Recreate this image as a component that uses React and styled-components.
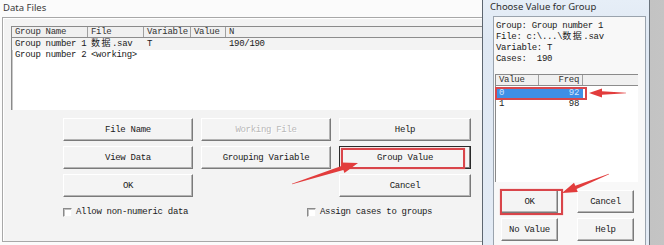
import React from "react";
import styled, { createGlobalStyle, css } from "styled-components";

const GlobalStyle = createGlobalStyle`
	html, body {
		margin: 0;
		padding: 0;
		background: #fbfbfb;
		overflow: hidden;
	}
`;

const mono = `"Liberation Mono", "Noto Sans CJK SC", monospace`;

const Screen = styled.div`
	position: relative;
	width: 664px;
	height: 245px;
	display: flex;
	overflow: hidden;
	background: #fbfbfb;
	font-family: ${mono};
	font-size: 9px;
	letter-spacing: -0.3px;
	color: #1a1a1a;
`;

const MainWindow = styled.div`
	width: 500px;
	display: flex;
	flex-direction: column;
`;

const WindowTitle = styled.div`
	height: 17px;
	line-height: 15px;
	padding-left: 3px;
	font-family: "Noto Sans", sans-serif;
	font-size: 9.5px;
	letter-spacing: 0;
	color: #3a3a3a;
	box-sizing: border-box;
`;

const Panel = styled.div`
	margin-left: 2px;
	height: 225px;
	border: 1px solid #a8a8a8;
	border-right: none;
	box-shadow: inset 1px 1px 0 #ffffff;
	background: #f3f3f3;
	padding: 8px 0 0 8px;
	box-sizing: border-box;
`;

const ListBox = styled.div`
	height: 84px;
	background: #ffffff;
	border-top: 1px solid #8a8a8a;
	border-left: 1px solid #8a8a8a;
	box-shadow: inset 1px 1px 0 #c8c8c8;
	box-sizing: border-box;
`;

const HeaderRow = styled.div`
	display: grid;
	grid-template-columns: ${(p) => p.$cols};
	height: 11px;
	background: #f0f0f0;
	border-bottom: 1px solid #8c8c8c;
	box-sizing: border-box;
`;

const HeaderCell = styled.div`
	padding-left: ${(p) => (p.$right ? "0" : "3px")};
	line-height: 10px;
	color: #333;
	border-right: 1px solid #a0a0a0;
	white-space: nowrap;
	overflow: hidden;
	text-align: ${(p) => (p.$right ? "right" : "left")};
	padding-right: ${(p) => (p.$right ? "3px" : "0")};
`;

const Row = styled.div`
	display: grid;
	grid-template-columns: ${(p) => p.$cols};
	height: ${(p) => p.$h || 11}px;
	line-height: ${(p) => p.$h || 11}px;
	background: ${(p) => p.$bg || "transparent"};
	color: ${(p) => p.$fg || "inherit"};
	white-space: nowrap;
`;

const Cell = styled.div`
	padding-left: 3px;
	overflow: hidden;
	text-align: ${(p) => (p.$right ? "right" : "left")};
	padding-right: ${(p) => (p.$right ? "4px" : "0")};
`;

const Wide = styled.span`
	letter-spacing: 1.5px;
`;

const ButtonGrid = styled.div`
	display: grid;
	grid-template-columns: ${(p) => p.$cols};
	grid-auto-rows: ${(p) => p.$rowH}px;
	column-gap: ${(p) => p.$colGap}px;
	row-gap: ${(p) => p.$rowGap}px;
	margin: ${(p) => p.$margin};
`;

const Button = styled.div`
	position: relative;
	display: flex;
	align-items: center;
	justify-content: center;
	background: #f4f4f4;
	border-top: 1px solid #ffffff;
	border-left: 1px solid #ffffff;
	border-right: 1px solid #7a7a7a;
	border-bottom: 1px solid #7a7a7a;
	box-shadow: inset -1px -1px 0 #b4b4b4;
	box-sizing: border-box;
	color: ${(p) => (p.$disabled ? "#b8b8b8" : "#1a1a1a")};
	text-shadow: ${(p) => (p.$disabled ? "1px 1px 0 #ffffff" : "none")};
	${(p) =>
		p.$focused &&
		css`
			border: 1px solid #2a2a2a;
			box-shadow: inset -1px -1px 0 #7a7a7a;
		`}
	${(p) =>
		p.$mark &&
		css`
			&::after {
				content: "";
				position: absolute;
				left: ${p.$mark[0]}px;
				top: ${p.$mark[1]}px;
				right: ${p.$mark[2]}px;
				bottom: ${p.$mark[3]}px;
				border: 2px solid #d9454a;
				box-shadow: 0 0 1px #e88;
			}
		`}
`;

const CheckRow = styled.div`
	display: flex;
	align-items: center;
	margin: 10px 0 0 52px;
`;

const CheckLabel = styled.label`
	display: flex;
	align-items: center;
	gap: 4px;
	width: ${(p) => (p.$w ? `${p.$w}px` : "auto")};
`;

const CheckBox = styled.span`
	width: 9px;
	height: 9px;
	box-sizing: border-box;
	border-top: 1px solid #8a8a8a;
	border-left: 1px solid #8a8a8a;
	border-right: 1px solid #f4f4f4;
	border-bottom: 1px solid #f4f4f4;
	background: #ffffff;
	box-shadow: inset 1px 1px 0 #c0c0c0;
`;

const Desktop = styled.div`
	flex: 1;
	background: linear-gradient(90deg, #6f6f6f 0, #7b7b7b 6px, #b9b9b9 7px, #c4c4c4 100%);
`;

const Dialog = styled.div`
	position: absolute;
	left: 482px;
	top: 0;
	width: 168px;
	height: 245px;
	display: flex;
	flex-direction: column;
	background: linear-gradient(180deg, #e6eef7 0, #dfe8f3 40px, #e3ebf5 100%);
	border-left: 1px solid #5d6670;
	border-right: 1px solid #6a737c;
	box-sizing: border-box;
`;

const DialogTitle = styled.div`
	height: 16px;
	line-height: 13px;
	padding-left: 7px;
	font-family: "Noto Sans", sans-serif;
	font-size: 9.5px;
	letter-spacing: 0;
	color: #2e2e2e;
	white-space: nowrap;
`;

const DialogClient = styled.div`
	flex: 1;
	margin: 0 3px 0 10px;
	background: #f8f8f8;
	border: 1px solid #9aa3ad;
	border-bottom: none;
	padding: 4px 0 0 1px;
	display: flex;
	flex-direction: column;
`;

const InfoLine = styled.div`
	height: 11px;
	line-height: 11px;
	padding-left: 1px;
	white-space: nowrap;
`;

const ValueList = styled.div`
	width: 143px;
	height: 108px;
	margin-top: 9px;
	background: #ffffff;
	border-top: 1px solid #8a8a8a;
	border-left: 1px solid #8a8a8a;
	box-sizing: border-box;
`;

const SelectedWrap = styled.div`
	position: relative;
	margin-top: 2px;
	width: 87px;
	&::after {
		content: "";
		position: absolute;
		left: -1px;
		top: -1px;
		right: -4px;
		bottom: -2px;
		border: 2px solid #d7474c;
	}
`;

const ArrowLayer = styled.svg`
	position: absolute;
	left: 0;
	top: 0;
	pointer-events: none;
`;

function arrowPoints(tail, tip, headLen, headW, shaftW, tailW) {
	const dx = tip[0] - tail[0];
	const dy = tip[1] - tail[1];
	const len = Math.hypot(dx, dy);
	const ux = dx / len;
	const uy = dy / len;
	const nx = -uy;
	const ny = ux;
	const bx = tip[0] - ux * headLen;
	const by = tip[1] - uy * headLen;
	const pts = [
		[tail[0] + (nx * tailW) / 2, tail[1] + (ny * tailW) / 2],
		[bx + (nx * shaftW) / 2, by + (ny * shaftW) / 2],
		[bx + (nx * headW) / 2, by + (ny * headW) / 2],
		tip,
		[bx - (nx * headW) / 2, by - (ny * headW) / 2],
		[bx - (nx * shaftW) / 2, by - (ny * shaftW) / 2],
		[tail[0] - (nx * tailW) / 2, tail[1] - (ny * tailW) / 2],
	];
	return pts.map((p) => `${p[0].toFixed(1)},${p[1].toFixed(1)}`).join(" ");
}

const arrows = [
	{ tail: [292, 184], tip: [358, 163], head: 16, w: 11, shaft: 4.5, tailW: 0.6 },
	{ tail: [626, 93], tip: [589, 93], head: 13, w: 9, shaft: 3.5, tailW: 0.6 },
	{ tail: [609, 174], tip: [562, 193], head: 15, w: 10, shaft: 3.5, tailW: 0.6 },
];

const mainCols = "76px 56px 47px 35px 1fr";
const dialogCols = "43px 44px 1fr";

const App = () => {
	return (
		<>
			<GlobalStyle />
			<Screen>
				<MainWindow>
					<WindowTitle>Data Files</WindowTitle>
					<Panel>
						<ListBox>
							<HeaderRow $cols={mainCols}>
								<HeaderCell>Group Name</HeaderCell>
								<HeaderCell>File</HeaderCell>
								<HeaderCell>Variable</HeaderCell>
								<HeaderCell>Value</HeaderCell>
								<HeaderCell>N</HeaderCell>
							</HeaderRow>
							<Row $cols={mainCols} $h={12} $bg="#f3f3f3">
								<Cell>Group number 1</Cell>
								<Cell>
									<Wide>数据</Wide>.sav
								</Cell>
								<Cell>T</Cell>
								<Cell></Cell>
								<Cell>190/190</Cell>
							</Row>
							<Row $cols={mainCols} $h={10}>
								<Cell>Group number 2</Cell>
								<Cell>&lt;working&gt;</Cell>
								<Cell></Cell>
								<Cell></Cell>
								<Cell></Cell>
							</Row>
						</ListBox>
						<ButtonGrid
							$cols="130px 130px 132px"
							$rowH={23}
							$colGap={8}
							$rowGap={5}
							$margin="8px 0 0 52px"
						>
							<Button>File Name</Button>
							<Button $disabled>Working File</Button>
							<Button>Help</Button>
							<Button>View Data</Button>
							<Button>Grouping Variable</Button>
							<Button $focused $mark={[1, 1, 5, -1]}>
								Group Value
							</Button>
							<Button>OK</Button>
							<div />
							<Button>Cancel</Button>
						</ButtonGrid>
						<CheckRow>
							<CheckLabel $w={244}>
								<CheckBox />
								Allow non-numeric data
							</CheckLabel>
							<CheckLabel>
								<CheckBox />
								Assign cases to groups
							</CheckLabel>
						</CheckRow>
					</Panel>
				</MainWindow>
				<Desktop />

				<Dialog>
					<DialogTitle>Choose Value for Group</DialogTitle>
					<DialogClient>
						<InfoLine>Group: Group number 1</InfoLine>
						<InfoLine>
							File: c:\...\<Wide>数据</Wide>.sav
						</InfoLine>
						<InfoLine>Variable: T</InfoLine>
						<InfoLine>Cases:&nbsp;&nbsp;190</InfoLine>
						<ValueList>
							<HeaderRow $cols={dialogCols}>
								<HeaderCell>Value</HeaderCell>
								<HeaderCell $right>Freq</HeaderCell>
								<div />
							</HeaderRow>
							<SelectedWrap>
								<Row $cols="43px 44px" $h={10} $bg="#3f8fe6" $fg="#d4e6fb">
									<Cell>0</Cell>
									<Cell $right>92</Cell>
								</Row>
							</SelectedWrap>
							<Row $cols="43px 44px" $h={13}>
								<Cell>1</Cell>
								<Cell $right>98</Cell>
							</Row>
						</ValueList>
						<ButtonGrid
							$cols="57px 57px"
							$rowH={23}
							$colGap={19}
							$rowGap={5}
							$margin="8px 0 0 6px"
						>
							<Button $mark={[-2, -2, -6, -3]}>OK</Button>
							<Button>Cancel</Button>
							<Button>No Value</Button>
							<Button>Help</Button>
						</ButtonGrid>
					</DialogClient>
				</Dialog>

				<ArrowLayer width="664" height="245" viewBox="0 0 664 245">
					{arrows.map((a, i) => (
						<polygon
							key={i}
							points={arrowPoints(a.tail, a.tip, a.head, a.w, a.shaft, a.tailW)}
							fill="#e23c3c"
						/>
					))}
				</ArrowLayer>
			</Screen>
		</>
	);
};

export default App;
